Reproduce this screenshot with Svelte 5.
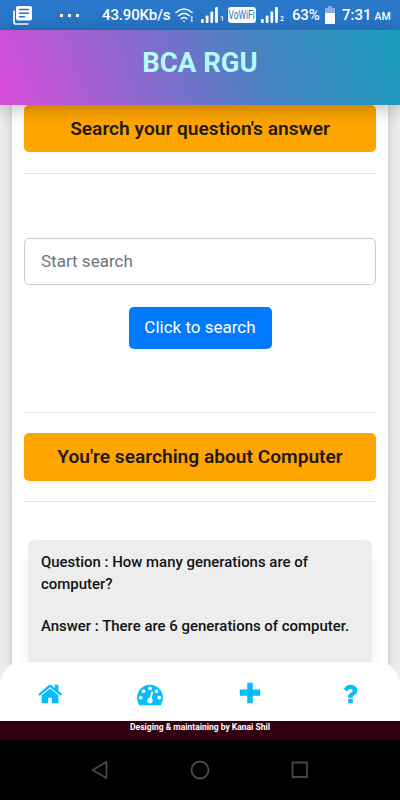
<script>
let query = $state('')

const tabs = [
	{ name: 'Home', path: 'M1408 992v480q0 26-19 45t-45 19h-384v-384h-256v384h-384q-26 0-45-19t-19-45v-480q0-1 .5-3t.5-3l575-474 575 474q1 2 1 6zm223-69l-62 74q-8 9-21 11h-3q-13 0-21-7l-692-577-692 577q-12 8-24 7-13-2-21-11l-62-74q-8-10-7-23.5t11-21.5l719-599q32-26 76-26t76 26l244 204v-195q0-14 9-23t23-9h192q14 0 23 9t9 23v408l219 182q10 8 11 21.5t-7 23.5z' },
	{ name: 'Dashboard', path: 'M384 1152q0-53-37.5-90.5t-90.5-37.5-90.5 37.5-37.5 90.5 37.5 90.5 90.5 37.5 90.5-37.5 37.5-90.5zm192-448q0-53-37.5-90.5t-90.5-37.5-90.5 37.5-37.5 90.5 37.5 90.5 90.5 37.5 90.5-37.5 37.5-90.5zm428 481l101-382q6-26-7.5-48.5t-38.5-29.5-48 6.5-30 39.5l-101 382q-60 5-107 43.5t-63 98.5q-20 77 20 146t117 89 146-20 89-117q16-60-6-117t-72-91zm660-33q0-53-37.5-90.5t-90.5-37.5-90.5 37.5-37.5 90.5 37.5 90.5 90.5 37.5 90.5-37.5 37.5-90.5zm-640-640q0-53-37.5-90.5t-90.5-37.5-90.5 37.5-37.5 90.5 37.5 90.5 90.5 37.5 90.5-37.5 37.5-90.5zm448 192q0-53-37.5-90.5t-90.5-37.5-90.5 37.5-37.5 90.5 37.5 90.5 90.5 37.5 90.5-37.5 37.5-90.5zm320 448q0 261-141 483-19 29-54 29h-1402q-35 0-54-29-141-221-141-483 0-182 71-348t191-286 286-191 348-71 348 71 286 191 191 286 71 348z' },
	{ name: 'Add', path: 'M1600 620v364q0 30-30 30h-482v482q0 30-30 30h-324q-30 0-30-30v-482h-482q-30 0-30-30v-364q0-30 30-30h482v-442q0-30 30-30h324q30 0 30 30v442h482q30 0 30 30z' },
	{ name: 'Help', path: 'M1088 1256v240q0 16-12 28t-28 12h-240q-16 0-28-12t-12-28v-240q0-16 12-28t28-12h240q16 0 28 12t12 28zm316-600q0 54-15.5 101t-35 76.5-55 59.5-57.5 43.5-61 35.5q-41 23-68.5 65t-27.5 67q0 17-12 32.5t-28 15.5h-240q-15 0-25.5-18.5t-10.5-37.5v-45q0-83 65-156.5t143-108.5q59-27 84-56t25-76q0-42-46.5-74t-107.5-32q-65 0-108 29-35 25-107 115-13 16-31 16-12 0-25-8l-164-125q-13-10-15.5-25t5.5-28q160-266 464-266 80 0 161 31t146 83 106 127.5 41 158.5z' }
]
</script>

{#snippet signal(n)}
	<svg class="signal signal{n}" width="17" height="16" viewBox="0 0 17 16" fill="#fff">
		<rect x="0" y="12" width="2.8" height="4" rx="1" />
		<rect x="4.7" y="8.5" width="2.8" height="7.5" rx="1" />
		<rect x="9.4" y="4.5" width="2.8" height="11.5" rx="1" />
		<rect x="14.1" y="0" width="2.8" height="16" rx="1" />
	</svg>
	<span class="sim sim{n}">{n}</span>
{/snippet}

<div class="app">
	<div class="status">
		<svg class="news" width="19" height="19" viewBox="0 0 19 19">
			<path d="M1 4.5v11.5q0 2 2 2h12.500" fill="none" stroke="#fff" stroke-width="1.700" />
			<path d="M5 0h12q2 0 2 2v10.500q0 2-2 2H5q-2 0-2-2V2q0-2 2-2z" fill="#fff" />
			<path d="M6 3.500h10M6 7.200h10M6 10.800h6" stroke="#2877c9" stroke-width="1.600" />
		</svg>
		<span class="dots"><i></i><i></i><i></i></span>
		<span class="speed">43.90Kb/s</span>
		<svg class="wifi" width="19" height="15" viewBox="0 0 19 15" fill="none" stroke="#fff" stroke-width="1.500" stroke-linecap="round">
			<path d="M1 4.500Q9 -2.500 17 4.500M3.600 7.700Q9 3 14.400 7.700M6.200 10.700Q9 8.300 11.800 10.700" />
			<path d="M7.500 12.700h3L9 14.300z" fill="#fff" stroke="none" />
			<path d="M16.800 9.200v.6M16.800 12.200v.6" stroke-width="1.800" />
		</svg>
		{@render signal(1)}
		<span class="vowifi"><b>VoWiFi</b></span>
		{@render signal(2)}
		<span class="percent">63%</span>
		<svg class="battery" width="10" height="18" viewBox="0 0 10 18">
			<path d="M3 0h4v2h3v5H0V2h3z" fill="#85b0df" />
			<path d="M0 7h10v11H0z" fill="#fff" />
		</svg>
		<span class="time">7:31<small>AM</small></span>
	</div>

	<header>BCA RGU</header>

	<main>
		<div class="container">
			<h4 class="banner">Search your question's answer</h4>
			<hr>
			<form onsubmit={(e) => e.preventDefault()}>
				<input type="text" placeholder="Start search" bind:value={query}>
				<button type="submit">Click to search</button>
			</form>
			<hr>
			<h4 class="banner second">You're searching about Computer</h4>
			<hr>
			<div class="answer">
				<p>Question : How many generations are of computer?</p>
				<p>Answer : There are 6 generations of computer.</p>
			</div>
		</div>
	</main>

	<nav>
		{#each tabs as { name, path }}
			<a href="#{name}" aria-label={name}>
				<svg width="26" height="26" viewBox="0 0 1792 1792"><path d={path} /></svg>
			</a>
		{/each}
	</nav>

	<footer>Desiging &amp; maintaining by Kanai Shil</footer>

	<div class="android">
		<svg width="18" height="20" viewBox="0 0 18 20"><path d="M15.500 2v16L1.500 10z" /></svg>
		<svg width="20" height="20" viewBox="0 0 20 20"><circle cx="10" cy="10" r="8.500" /></svg>
		<svg width="18" height="18" viewBox="0 0 18 18"><rect x="1.500" y="1.500" width="14.500" height="14.500" /></svg>
	</div>
</div>

<style>
:global(body){
  margin: 0;
  background-color: #000;
}

.app{
  display: flex;
  flex-direction: column;
  width: 400px;
  height: 800px;
  overflow: hidden;
  font-family: Roboto, "Liberation Sans", sans-serif;
  color: #212529;
}

.app *{
  box-sizing: border-box;
}

.status{
  display: flex;
  align-items: center;
  flex: 0 0 30px;
  color: #fff;
  font-size: 15px;
  font-weight: 500;
  white-space: nowrap;
  background-color: #2877c9;
}

.status svg,
.status span{
  flex-shrink: 0;
}

.news{
  margin-left: 13px;
}

.dots{
  display: flex;
  gap: 5px;
  width: 19px;
  margin-left: 28px;
}

.dots i{
  width: 3px;
  height: 3px;
  background-color: #fff;
}

.speed{
  width: 69px;
  margin-left: 23px;
  letter-spacing: -0.15px;
}

.wifi{
  margin-left: 4px;
}

.signal1{
  margin-left: 7px;
}

.signal2{
  margin-left: 5px;
}

.sim{
  width: 5px;
  margin-left: 2px;
  padding-top: 7px;
  font-size: 7px;
}

.vowifi{
  display: flex;
  justify-content: center;
  width: 28px;
  height: 16px;
  margin-left: 3px;
  border-radius: 3px;
  color: #2877c9;
  font-size: 12px;
  line-height: 16px;
  background-color: #fff;
}

.vowifi b{
  font-weight: 400;
  transform: scaleX(0.7);
}

.percent{
  width: 28px;
  margin-left: 7px;
  letter-spacing: -0.2px;
}

.battery{
  margin-left: 5px;
}

.time{
  display: flex;
  align-items: baseline;
  gap: 3px;
  margin-left: 7px;
}

.time small{
  font-size: 10.500px;
}

header{
  position: relative;
  z-index: 1;
  flex: 0 0 75px;
  padding-top: 13px;
  color: #b3fbff;
  font-size: 27.500px;
  font-weight: 700;
  line-height: 39px;
  text-align: center;
  background: linear-gradient(70deg, #d94bd8 0%, #4683c3 65%, #189dbb 100%);
  box-shadow: 0 3px 18px rgba(0, 0, 0, 0.28);
}

main{
  flex: 0 0 616px;
  padding: 0 12px;
  overflow: hidden;
  background-color: #ececec;
}

.container{
  height: 640px;
  padding: 0 12px;
  background-color: #fff;
  box-shadow: 0 0 10px #c6c6bb;
}

.banner{
  height: 47px;
  margin: 0;
  border-radius: 5px;
  color: #1f1a10;
  font-size: 19.150px;
  font-weight: 600;
  line-height: 47px;
  text-align: center;
  background-color: #ffa500;
}

.second{
  height: 48px;
}

hr{
  height: 1px;
  margin: 21px 0 20px;
  border: 0;
  background-color: #e5e5e5;
}

.second + hr{
  margin-top: 20px;
}

form{
  display: flex;
  flex-direction: column;
  align-items: center;
  height: 238px;
  padding-top: 44px;
}

input{
  width: 100%;
  height: 47px;
  padding: 0 15px 2px 16px;
  border: 1px solid #c8cbce;
  border-radius: 5px;
  font: 17px Roboto, sans-serif;
}

input::placeholder{
  color: #6c757d;
}

button{
  width: 143px;
  height: 42px;
  margin-top: 22px;
  padding: 0 0 2px;
  border: 0;
  border-radius: 5px;
  color: #fff;
  font: 17px Roboto, sans-serif;
  background-color: #007bff;
}

form + hr{
  margin-top: -20px;
}

.answer{
  height: 180px;
  margin: 38px 4px 0;
  padding: 11px 13px;
  border-radius: 6px;
  color: #121416;
  font-size: 14.950px;
  font-weight: 500;
  line-height: 22px;
  background-color: #ededed;
  box-shadow: 0 14px 14px #f0f0ea;
}

.answer p{
  margin: 0 0 20px;
}

nav{
  position: relative;
  z-index: 1;
  display: grid;
  grid-template-columns: repeat(4, 1fr);
  flex: 0 0 59px;
  margin-top: -59px;
  padding-top: 5px;
  border-radius: 22px 22px 0 0;
  background-color: #fff;
}

nav a{
  display: flex;
  justify-content: center;
  align-items: center;
}

nav a:first-child{
  padding-left: 2px;
}

nav svg{
  fill: #05bdfb;
}

footer{
  flex: 0 0 19px;
  color: #fff;
  font-size: 8.500px;
  font-weight: 700;
  line-height: 12px;
  text-align: center;
  background-color: #330011;
}

.android{
  display: flex;
  justify-content: space-between;
  align-items: center;
  flex: 0 0 60px;
  padding: 0 91px;
  background-color: #000;
}

.android svg{
  fill: none;
  stroke: #484848;
  stroke-width: 1.800;
  stroke-linejoin: round;
}
</style>
